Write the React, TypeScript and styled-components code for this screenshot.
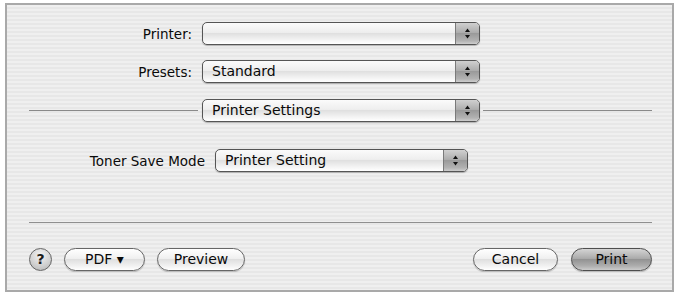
import React from "react";
import styled, { createGlobalStyle } from "styled-components";

const Global = createGlobalStyle`
  html, body { margin: 0; padding: 0; background: #ffffff; }
  body { font-family: "DejaVu Sans", "Liberation Sans", sans-serif; }
`;

const Dialog = styled.div`
  box-sizing: border-box;
  margin: 3px 0 0 5px;
  width: 669px;
  height: 289px;
  border: 2px solid #a9a9a9;
  background: repeating-linear-gradient(
    to bottom,
    #efefef 0px,
    #efefef 2px,
    #e7e7e7 2px,
    #e7e7e7 4px
  );
  display: flex;
  flex-direction: column;
`;

const Row = styled.div<{ $top: number }>`
  display: flex;
  align-items: center;
  margin-top: ${(p) => p.$top}px;
  height: 23px;
`;

const Label = styled.div<{ $w: number }>`
  width: ${(p) => p.$w}px;
  text-align: right;
  font-size: 13.5px;
  color: #0a0a0a;
  margin-right: 10px;
  white-space: nowrap;
`;

const Popup = styled.div<{ $w: number }>`
  box-sizing: border-box;
  width: ${(p) => p.$w}px;
  height: 23px;
  border: 1px solid #555555;
  border-radius: 5px;
  display: flex;
  overflow: hidden;
  box-shadow: 0 1px 1px rgba(0, 0, 0, 0.25);
  background: linear-gradient(
    to bottom,
    #fbfbfb 0%,
    #eeeeee 45%,
    #e0e0e0 50%,
    #f3f3f3 80%,
    #ffffff 100%
  );
`;

const PopupText = styled.div`
  flex: 1;
  font-size: 14px;
  line-height: 21px;
  padding-left: 9px;
  color: #0a0a0a;
  white-space: nowrap;
`;

const Stepper = styled.div`
  width: 23px;
  border-left: 1px solid #7a7a7a;
  background: linear-gradient(
    to bottom,
    #d0d0d0 0%,
    #adadad 45%,
    #9a9a9a 50%,
    #b2b2b2 85%,
    #cdcdcd 100%
  );
  display: flex;
  align-items: center;
  justify-content: center;
`;

const Line = styled.div<{ $ml?: number; $mr?: number }>`
  flex: 1;
  height: 1px;
  background: #8a8a8a;
  margin-left: ${(p) => p.$ml ?? 0}px;
  margin-right: ${(p) => p.$mr ?? 0}px;
`;

const Separator = styled.div`
  height: 1px;
  background: #8f8f8f;
  margin: 50px 20px 0 22px;
`;

const ButtonRow = styled.div`
  display: flex;
  align-items: center;
  margin: 24px 20px 0 22px;
  height: 24px;
`;

const Help = styled.div`
  box-sizing: border-box;
  width: 23px;
  height: 23px;
  border-radius: 50%;
  border: 1px solid #666666;
  background: radial-gradient(circle at 50% 30%, #f4f4f4 0%, #cfcfcf 60%, #b0b0b0 100%);
  font-size: 14px;
  font-weight: bold;
  text-align: center;
  line-height: 21px;
  color: #1a1a1a;
  margin-right: 12px;
`;

const Button = styled.div<{ $w: number; $default?: boolean; $ml?: number }>`
  box-sizing: border-box;
  width: ${(p) => p.$w}px;
  height: 23px;
  border-radius: 12px;
  border: 1px solid ${(p) => (p.$default ? "#4e4e4e" : "#666666")};
  margin-left: ${(p) => p.$ml ?? 0}px;
  font-size: 14px;
  line-height: 21px;
  text-align: center;
  color: #0a0a0a;
  white-space: nowrap;
  box-shadow: 0 1px 1px rgba(0, 0, 0, 0.2);
  background: ${(p) =>
    p.$default
      ? "linear-gradient(to bottom, #d4d4d4 0%, #ababab 45%, #939393 50%, #adadad 80%, #cbcbcb 100%)"
      : "linear-gradient(to bottom, #ffffff 0%, #f0f0f0 45%, #dfdfdf 50%, #f1f1f1 80%, #ffffff 100%)"};
`;

const Spacer = styled.div`
  flex: 1;
`;

const Arrows = () => (
  <svg width="7" height="13" viewBox="0 0 7 13">
    <polygon points="3.5,1.5 6,5 1,5" fill="#111" />
    <polygon points="1,8 6,8 3.5,11.5" fill="#111" />
  </svg>
);

const Select = ({ w, value }: { w: number; value: string }) => (
  <Popup $w={w}>
    <PopupText>{value}</PopupText>
    <Stepper>
      <Arrows />
    </Stepper>
  </Popup>
);

export default function App() {
  return (
    <>
      <Global />
      <Dialog>
        <Row $top={17}>
          <Label $w={185}>Printer:</Label>
          <Select w={278} value="" />
        </Row>
        <Row $top={15}>
          <Label $w={185}>Presets:</Label>
          <Select w={278} value="Standard" />
        </Row>
        <Row $top={16}>
          <Line $ml={22} $mr={4} />
          <Select w={278} value="Printer Settings" />
          <Line $ml={3} $mr={20} />
        </Row>
        <Row $top={27}>
          <Label $w={198}>Toner Save Mode</Label>
          <Select w={253} value="Printer Setting" />
        </Row>
        <Separator />
        <ButtonRow>
          <Help>?</Help>
          <Button $w={81}>PDF ▾</Button>
          <Button $w={88} $ml={12}>Preview</Button>
          <Spacer />
          <Button $w={85}>Cancel</Button>
          <Button $w={81} $ml={13} $default>
            Print
          </Button>
        </ButtonRow>
      </Dialog>
    </>
  );
}
